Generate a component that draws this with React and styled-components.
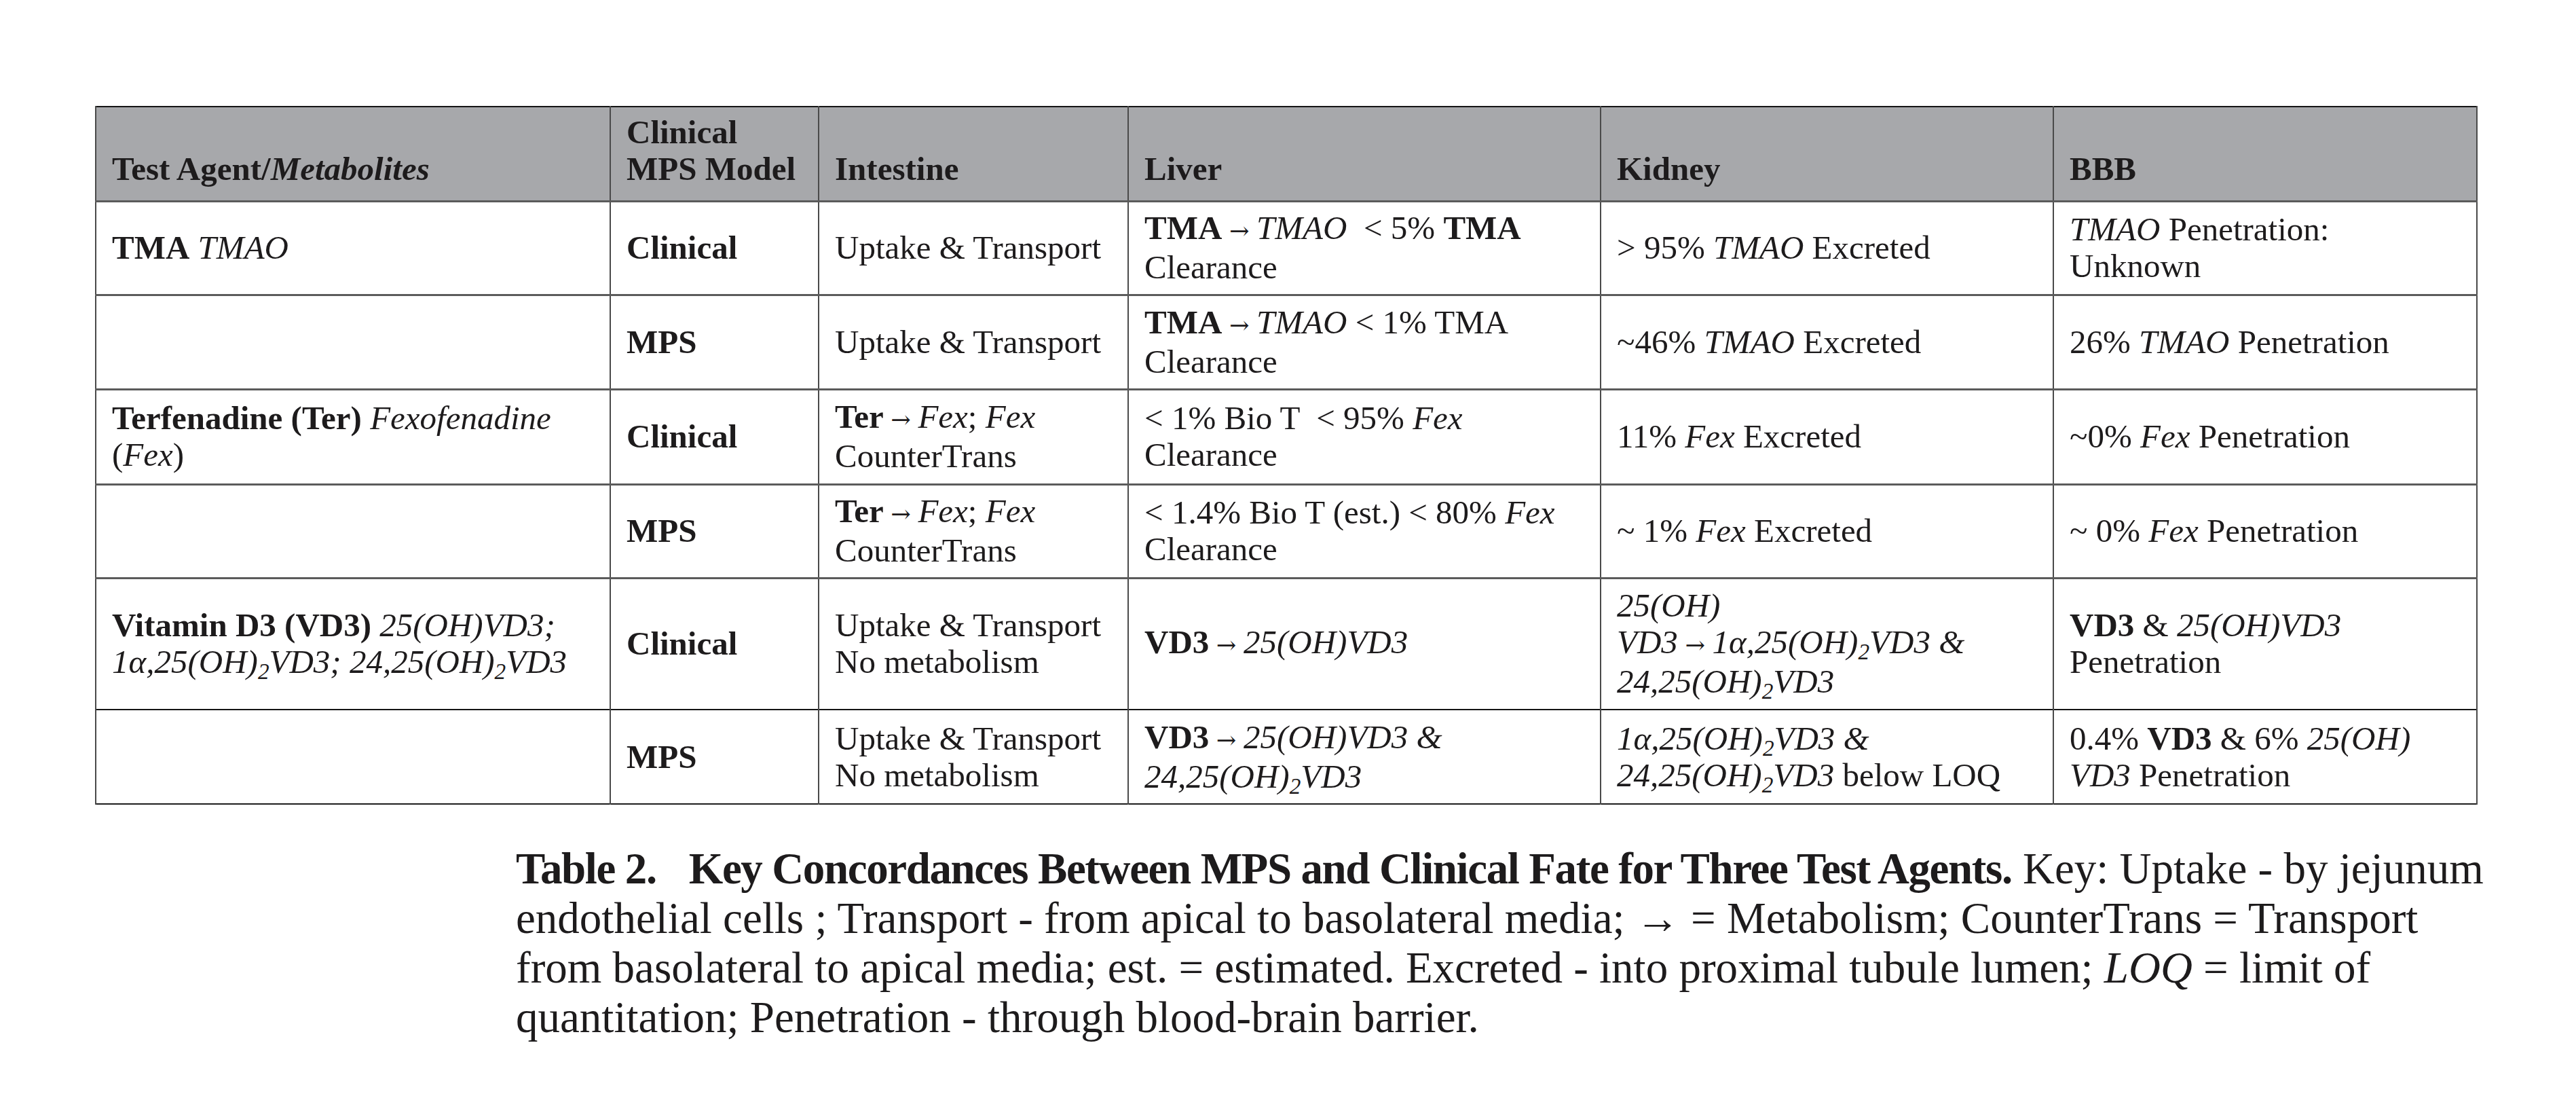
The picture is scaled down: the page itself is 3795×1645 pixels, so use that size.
import React from "react";
import styled, { createGlobalStyle } from "styled-components";

const Global = createGlobalStyle`
  html, body { margin: 0; padding: 0; background: #ffffff; }
  body { font-family: "Liberation Serif", "Times New Roman", serif; color: #1d1b1c; }
`;

const Page = styled.main`
  width: 3795px;
  min-height: 1645px;
  box-sizing: border-box;
  padding: 156px 0 0 140px;
  display: flex;
  flex-direction: column;
  align-items: flex-start;
`;

const Table = styled.table`
  width: 3508px;
  table-layout: fixed;
  border-collapse: collapse;
  font-family: "Liberation Serif", "Times New Roman", serif;
  font-size: 49px;
  line-height: 54px;
  color: #1d1b1c;
  border-top: 2px solid #141414;
  border-bottom: 2px solid #1e1e1e;
  border-left: 2px solid #555555;
  border-right: 2px solid #555555;
`;

const HeadRow = styled.tr`
  height: 139px;
  background: #a7a8ab;
  border-bottom: 2px solid #141414;
`;

const HeadCell = styled.th`
  text-align: left;
  vertical-align: bottom;
  font-weight: 700;
  padding: 0 20px 19px 23px;
  white-space: nowrap;
  border-left: 2px solid #4a4a4a;
  border-right: 2px solid #4a4a4a;
`;

const Row = styled.tr`
  height: ${(p) => p.$h}px;
  border-top: ${(p) => (p.$strong ? "2px solid #141414" : "3px solid #5b5b5b")};
`;

const Cell = styled.td`
  vertical-align: middle;
  padding: 0 20px 0 23px;
  white-space: nowrap;
  border-left: 2px solid #4a4a4a;
  border-right: 2px solid #4a4a4a;
  font-weight: ${(p) => (p.$bold ? 700 : 400)};
`;

const B = styled.b`
  font-weight: 700;
`;

const I = styled.i`
  font-style: italic;
`;

const Sub = styled.sub`
  font-size: 0.68em;
  line-height: 0;
  vertical-align: -0.28em;
`;

const Arr = styled.span`
  font-family: "DejaVu Serif", "Liberation Serif", serif;
  font-size: 0.72em;
  font-weight: 400;
  font-style: normal;
  padding: 0 0.3em;
`;

const Caption = styled.p`
  margin: 58px 0 0 620px;
  font-family: "Liberation Serif", "Times New Roman", serif;
  font-size: 65px;
  line-height: 73px;
  color: #1d1b1c;
  white-space: nowrap;
`;

const Label = styled.b`
  font-weight: 700;
  letter-spacing: -1.4px;
  margin-right: 48px;
`;

const Title = styled.b`
  font-weight: 700;
  letter-spacing: -1.4px;
`;

const cols = [758, 307, 456, 696, 667, 624];

export default function App() {
  return (
    <>
      <Global />
      <Page>
        <Table>
          <colgroup>
            {cols.map((w, i) => (
              <col key={i} style={{ width: w }} />
            ))}
          </colgroup>
          <thead>
            <HeadRow>
              <HeadCell>
                Test Agent/<I>Metabolites</I>
              </HeadCell>
              <HeadCell>
                Clinical
                <br />
                MPS Model
              </HeadCell>
              <HeadCell>Intestine</HeadCell>
              <HeadCell>Liver</HeadCell>
              <HeadCell>Kidney</HeadCell>
              <HeadCell>BBB</HeadCell>
            </HeadRow>
          </thead>
          <tbody>
            <Row $h={138}>
              <Cell>
                <B>TMA</B> <I>TMAO</I>
              </Cell>
              <Cell $bold>Clinical</Cell>
              <Cell>Uptake &amp; Transport</Cell>
              <Cell>
                <B>TMA</B>
                <Arr>→</Arr>
                <I>TMAO</I> &nbsp;&lt; 5% <B>TMA</B>
                <br />
                Clearance
              </Cell>
              <Cell>
                &gt; 95% <I>TMAO</I> Excreted
              </Cell>
              <Cell>
                <I>TMAO</I> Penetration:
                <br />
                Unknown
              </Cell>
            </Row>
            <Row $h={139}>
              <Cell />
              <Cell $bold>MPS</Cell>
              <Cell>Uptake &amp; Transport</Cell>
              <Cell>
                <B>TMA</B>
                <Arr>→</Arr>
                <I>TMAO</I> &lt; 1% TMA
                <br />
                Clearance
              </Cell>
              <Cell>
                ~46% <I>TMAO</I> Excreted
              </Cell>
              <Cell>
                26% <I>TMAO</I> Penetration
              </Cell>
            </Row>
            <Row $h={140}>
              <Cell>
                <B>Terfenadine (Ter)</B> <I>Fexofenadine</I>
                <br />(<I>Fex</I>)
              </Cell>
              <Cell $bold>Clinical</Cell>
              <Cell>
                <B>Ter</B>
                <Arr>→</Arr>
                <I>Fex</I>; <I>Fex</I>
                <br />
                CounterTrans
              </Cell>
              <Cell>
                &lt; 1% Bio T &nbsp;&lt; 95% <I>Fex</I>
                <br />
                Clearance
              </Cell>
              <Cell>
                11% <I>Fex</I> Excreted
              </Cell>
              <Cell>
                ~0% <I>Fex</I> Penetration
              </Cell>
            </Row>
            <Row $h={138}>
              <Cell />
              <Cell $bold>MPS</Cell>
              <Cell>
                <B>Ter</B>
                <Arr>→</Arr>
                <I>Fex</I>; <I>Fex</I>
                <br />
                CounterTrans
              </Cell>
              <Cell>
                &lt; 1.4% Bio T (est.) &lt; 80% <I>Fex</I>
                <br />
                Clearance
              </Cell>
              <Cell>
                ~ 1% <I>Fex</I> Excreted
              </Cell>
              <Cell>
                ~ 0% <I>Fex</I> Penetration
              </Cell>
            </Row>
            <Row $h={194}>
              <Cell>
                <B>Vitamin D3 (VD3)</B> <I>25(OH)VD3;</I>
                <br />
                <I>
                  1α,25(OH)<Sub>2</Sub>VD3; 24,25(OH)<Sub>2</Sub>VD3
                </I>
              </Cell>
              <Cell $bold>Clinical</Cell>
              <Cell>
                Uptake &amp; Transport
                <br />
                No metabolism
              </Cell>
              <Cell>
                <B>VD3</B>
                <Arr>→</Arr>
                <I>25(OH)VD3</I>
              </Cell>
              <Cell>
                <I>25(OH)</I>
                <br />
                <I>VD3</I>
                <Arr>→</Arr>
                <I>
                  1α,25(OH)<Sub>2</Sub>VD3 &amp;
                </I>
                <br />
                <I>
                  24,25(OH)<Sub>2</Sub>VD3
                </I>
              </Cell>
              <Cell>
                <B>VD3</B> &amp; <I>25(OH)VD3</I>
                <br />
                Penetration
              </Cell>
            </Row>
            <Row $h={139} $strong>
              <Cell />
              <Cell $bold>MPS</Cell>
              <Cell>
                Uptake &amp; Transport
                <br />
                No metabolism
              </Cell>
              <Cell>
                <B>VD3</B>
                <Arr>→</Arr>
                <I>25(OH)VD3 &amp;</I>
                <br />
                <I>
                  24,25(OH)<Sub>2</Sub>VD3
                </I>
              </Cell>
              <Cell>
                <I>
                  1α,25(OH)<Sub>2</Sub>VD3 &amp;
                </I>
                <br />
                <I>
                  24,25(OH)<Sub>2</Sub>VD3
                </I>{" "}
                below LOQ
              </Cell>
              <Cell>
                0.4% <B>VD3</B> &amp; 6% <I>25(OH)</I>
                <br />
                <I>VD3</I> Penetration
              </Cell>
            </Row>
          </tbody>
        </Table>
        <Caption>
          <Label>Table 2.</Label>
          <Title>Key Concordances Between MPS and Clinical Fate for Three Test Agents.</Title> Key: Uptake - by
          jejunum
          <br />
          endothelial cells ; Transport - from apical to basolateral media; → = Metabolism; CounterTrans = Transport
          <br />
          from basolateral to apical media; est. = estimated. Excreted - into proximal tubule lumen; <I>LOQ</I> = limit
          of
          <br />
          quantitation; Penetration - through blood-brain barrier.
        </Caption>
      </Page>
    </>
  );
}
